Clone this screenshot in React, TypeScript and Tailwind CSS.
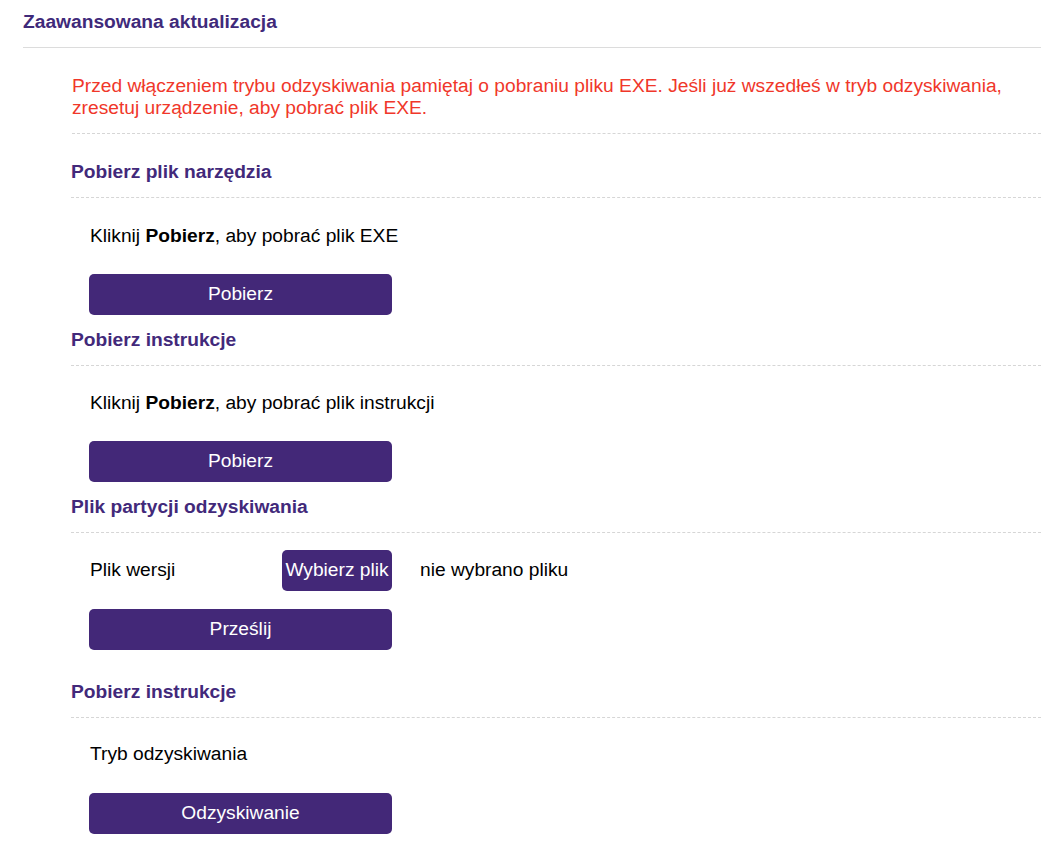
import React from "react";

const font = { fontFamily: '"Liberation Sans", Arial, sans-serif' };

function Heading({ children, top = "pt-[14px]" }: { children: React.ReactNode; top?: string }) {
  return (
    <div className={`ml-[71px] border-b border-dashed border-[#d6d6d6] ${top} pb-[14px]`}>
      <h3 className="text-[19.2px] font-bold leading-[22px] text-[#42297a]">{children}</h3>
    </div>
  );
}

function PurpleButton({ children }: { children: React.ReactNode }) {
  return (
    <button className="ml-[89px] block h-[41px] w-[303px] rounded-[5px] bg-[#432878] text-[19.2px] text-white">
      {children}
    </button>
  );
}

export default function App() {
  return (
    <div className="min-h-[854px] bg-white text-black" style={font}>
      <div className="ml-[23px] border-b border-[#dcdcdc] pt-[11px] pb-[14px]">
        <h2 className="text-[19.2px] font-bold leading-[22px] text-[#3f2a7a]">Zaawansowana aktualizacja</h2>
      </div>

      <div className="ml-[72px] border-b border-dashed border-[#d6d6d6] pt-[27px] pb-[14px]">
        <p className="pr-[30px] text-[19.2px] leading-[22px] text-[#f0372a]">
          Przed włączeniem trybu odzyskiwania pamiętaj o pobraniu pliku EXE. Jeśli już wszedłeś w tryb odzyskiwania,
          zresetuj urządzenie, aby pobrać plik EXE.
        </p>
      </div>

      <Heading top="pt-[27px]">Pobierz plik narzędzia</Heading>
      <p className="ml-[90px] pt-[26px] text-[19.2px] leading-[24px]">
        Kliknij <b>Pobierz</b>, aby pobrać plik EXE
      </p>
      <div className="pt-[26px]">
        <PurpleButton>Pobierz</PurpleButton>
      </div>

      <Heading>Pobierz instrukcje</Heading>
      <p className="ml-[90px] pt-[25px] text-[19.2px] leading-[24px]">
        Kliknij <b>Pobierz</b>, aby pobrać plik instrukcji
      </p>
      <div className="pt-[26px]">
        <PurpleButton>Pobierz</PurpleButton>
      </div>

      <Heading>Plik partycji odzyskiwania</Heading>
      <div className="ml-[90px] mt-[17px] flex h-[41px] items-center text-[19.2px]">
        <span className="w-[192px]">Plik wersji</span>
        <button className="h-[41px] w-[110px] whitespace-nowrap rounded-[5px] bg-[#432878] text-[19.2px] text-white">
          Wybierz plik
        </button>
        <span className="ml-[28px]">nie wybrano pliku</span>
      </div>
      <div className="pt-[18px] pb-[17px]">
        <PurpleButton>Prześlij</PurpleButton>
      </div>

      <Heading>Pobierz instrukcje</Heading>
      <p className="ml-[90px] pt-[24px] text-[19.2px] leading-[24px]">Tryb odzyskiwania</p>
      <div className="pt-[27px]">
        <PurpleButton>Odzyskiwanie</PurpleButton>
      </div>
    </div>
  );
}
